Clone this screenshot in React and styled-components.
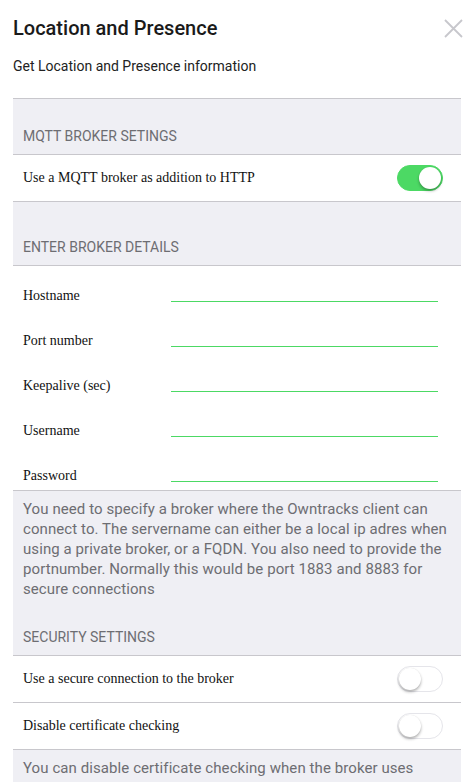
import React, { useState } from "react";
import styled, { createGlobalStyle } from "styled-components";

const GlobalStyle = createGlobalStyle`
  html, body { margin: 0; padding: 0; background: #ffffff; }
  body { font-family: Roboto, "Noto Sans", sans-serif; color: #222; }
  * { box-sizing: border-box; }
`;

const Page = styled.div`
  width: 469px;
  height: 782px;
  overflow: hidden;
  padding: 0 8px 0 13px;
`;

const TitleBar = styled.div`
  display: flex;
  align-items: center;
  justify-content: space-between;
  height: 56px;
`;

const Title = styled.h1`
  margin: 0;
  font-family: Roboto, sans-serif;
  font-size: 20px;
  font-weight: 500;
  color: #1a1a1a;
  line-height: 24px;
`;

const CloseButton = styled.button`
  display: flex;
  align-items: center;
  justify-content: center;
  width: 20px;
  height: 20px;
  padding: 0;
  margin-right: -2px;
  border: none;
  background: transparent;
`;

const Subtitle = styled.p`
  margin: 0;
  font-size: 14px;
  line-height: 20px;
  color: #222;
`;

const Panel = styled.div`
  margin-top: 22px;
  border-top: 1px solid #c8c7cc;
`;

const GroupHeader = styled.div`
  background: #efeff4;
  padding: ${(p) => p.$top}px 10px 8px;
  font-size: 14px;
  line-height: 20px;
  color: #6d6d72;
  text-transform: uppercase;
  border-bottom: 1px solid #c8c7cc;
`;

const Row = styled.div`
  display: flex;
  align-items: center;
  justify-content: space-between;
  height: 47px;
  padding: 0 18px 0 10px;
  background: #fff;
  border-bottom: 1px solid #c8c7cc;
`;

const RowLabel = styled.span`
  font-family: "Liberation Serif", "Times New Roman", serif;
  font-size: 14px;
  color: #111;
`;

const SwitchTrack = styled.button`
  position: relative;
  width: 46px;
  height: 26px;
  padding: 0;
  border-radius: 13px;
  border: 1px solid ${(p) => (p.$on ? "#4cd964" : "#e5e5ea")};
  background: ${(p) => (p.$on ? "#4cd964" : "#ffffff")};
  cursor: pointer;
`;

const SwitchKnob = styled.span`
  position: absolute;
  top: 1px;
  left: ${(p) => (p.$on ? "21px" : "1px")};
  width: 22px;
  height: 22px;
  border-radius: 50%;
  background: #fff;
  box-shadow: 0 2px 3px rgba(0, 0, 0, 0.3), 0 0 1px rgba(0, 0, 0, 0.1);
`;

const FieldList = styled.div`
  display: flex;
  flex-direction: column;
  gap: 28px;
  padding: 21px 23px 6px 10px;
  background: #fff;
  border-bottom: 1px solid #c8c7cc;
`;

const FieldRow = styled.label`
  display: flex;
  align-items: flex-start;
  height: 17px;
`;

const FieldLabel = styled.span`
  width: 148px;
  flex-shrink: 0;
  font-family: "Liberation Serif", "Times New Roman", serif;
  font-size: 14px;
  line-height: 17px;
  color: #111;
`;

const FieldInput = styled.input`
  flex: 1;
  min-width: 0;
  height: 15px;
  padding: 0;
  border: none;
  border-bottom: 1px solid #4cd964;
  background: transparent;
  outline: none;
  font-size: 14px;
`;

const Note = styled.div`
  background: #efeff4;
  padding: ${(p) => p.$top}px 10px 0;
  font-size: 15px;
  line-height: 20px;
  letter-spacing: 0.08px;
  color: #6d6d72;
`;

function Switch({ initial }) {
  const [on, setOn] = useState(initial);
  return (
    <SwitchTrack $on={on} onClick={() => setOn(!on)} aria-pressed={on}>
      <SwitchKnob $on={on} />
    </SwitchTrack>
  );
}

const fields = ["Hostname", "Port number", "Keepalive (sec)", "Username", "Password"];

export default function App() {
  return (
    <>
      <GlobalStyle />
      <Page>
        <TitleBar>
          <Title>Location and Presence</Title>
          <CloseButton aria-label="Close">
            <svg width="19" height="19" viewBox="0 0 19 19">
              <path d="M1 1 L18 18 M18 1 L1 18" stroke="#c7c7cc" strokeWidth="1.8" fill="none" />
            </svg>
          </CloseButton>
        </TitleBar>
        <Subtitle>Get Location and Presence information</Subtitle>
        <Panel>
          <GroupHeader $top={27}>MQTT broker setings</GroupHeader>
          <Row>
            <RowLabel>Use a MQTT broker as addition to HTTP</RowLabel>
            <Switch initial={true} />
          </Row>
          <GroupHeader $top={35}>Enter broker details</GroupHeader>
          <FieldList>
            {fields.map((f) => (
              <FieldRow key={f}>
                <FieldLabel>{f}</FieldLabel>
                <FieldInput type={f === "Password" ? "password" : "text"} />
              </FieldRow>
            ))}
          </FieldList>
          <Note $top={8}>
            You need to specify a broker where the Owntracks client can connect to. The servername can either be a local ip adres when using a private broker, or a FQDN. You also need to provide the portnumber. Normally this would be port 1883 and 8883 for secure connections
          </Note>
          <GroupHeader $top={28}>Security settings</GroupHeader>
          <Row>
            <RowLabel>Use a secure connection to the broker</RowLabel>
            <Switch initial={false} />
          </Row>
          <Row>
            <RowLabel>Disable certificate checking</RowLabel>
            <Switch initial={false} />
          </Row>
          <Note $top={8}>
            You can disable certificate checking when the broker uses selfsigned certificates.
          </Note>
        </Panel>
      </Page>
    </>
  );
}
